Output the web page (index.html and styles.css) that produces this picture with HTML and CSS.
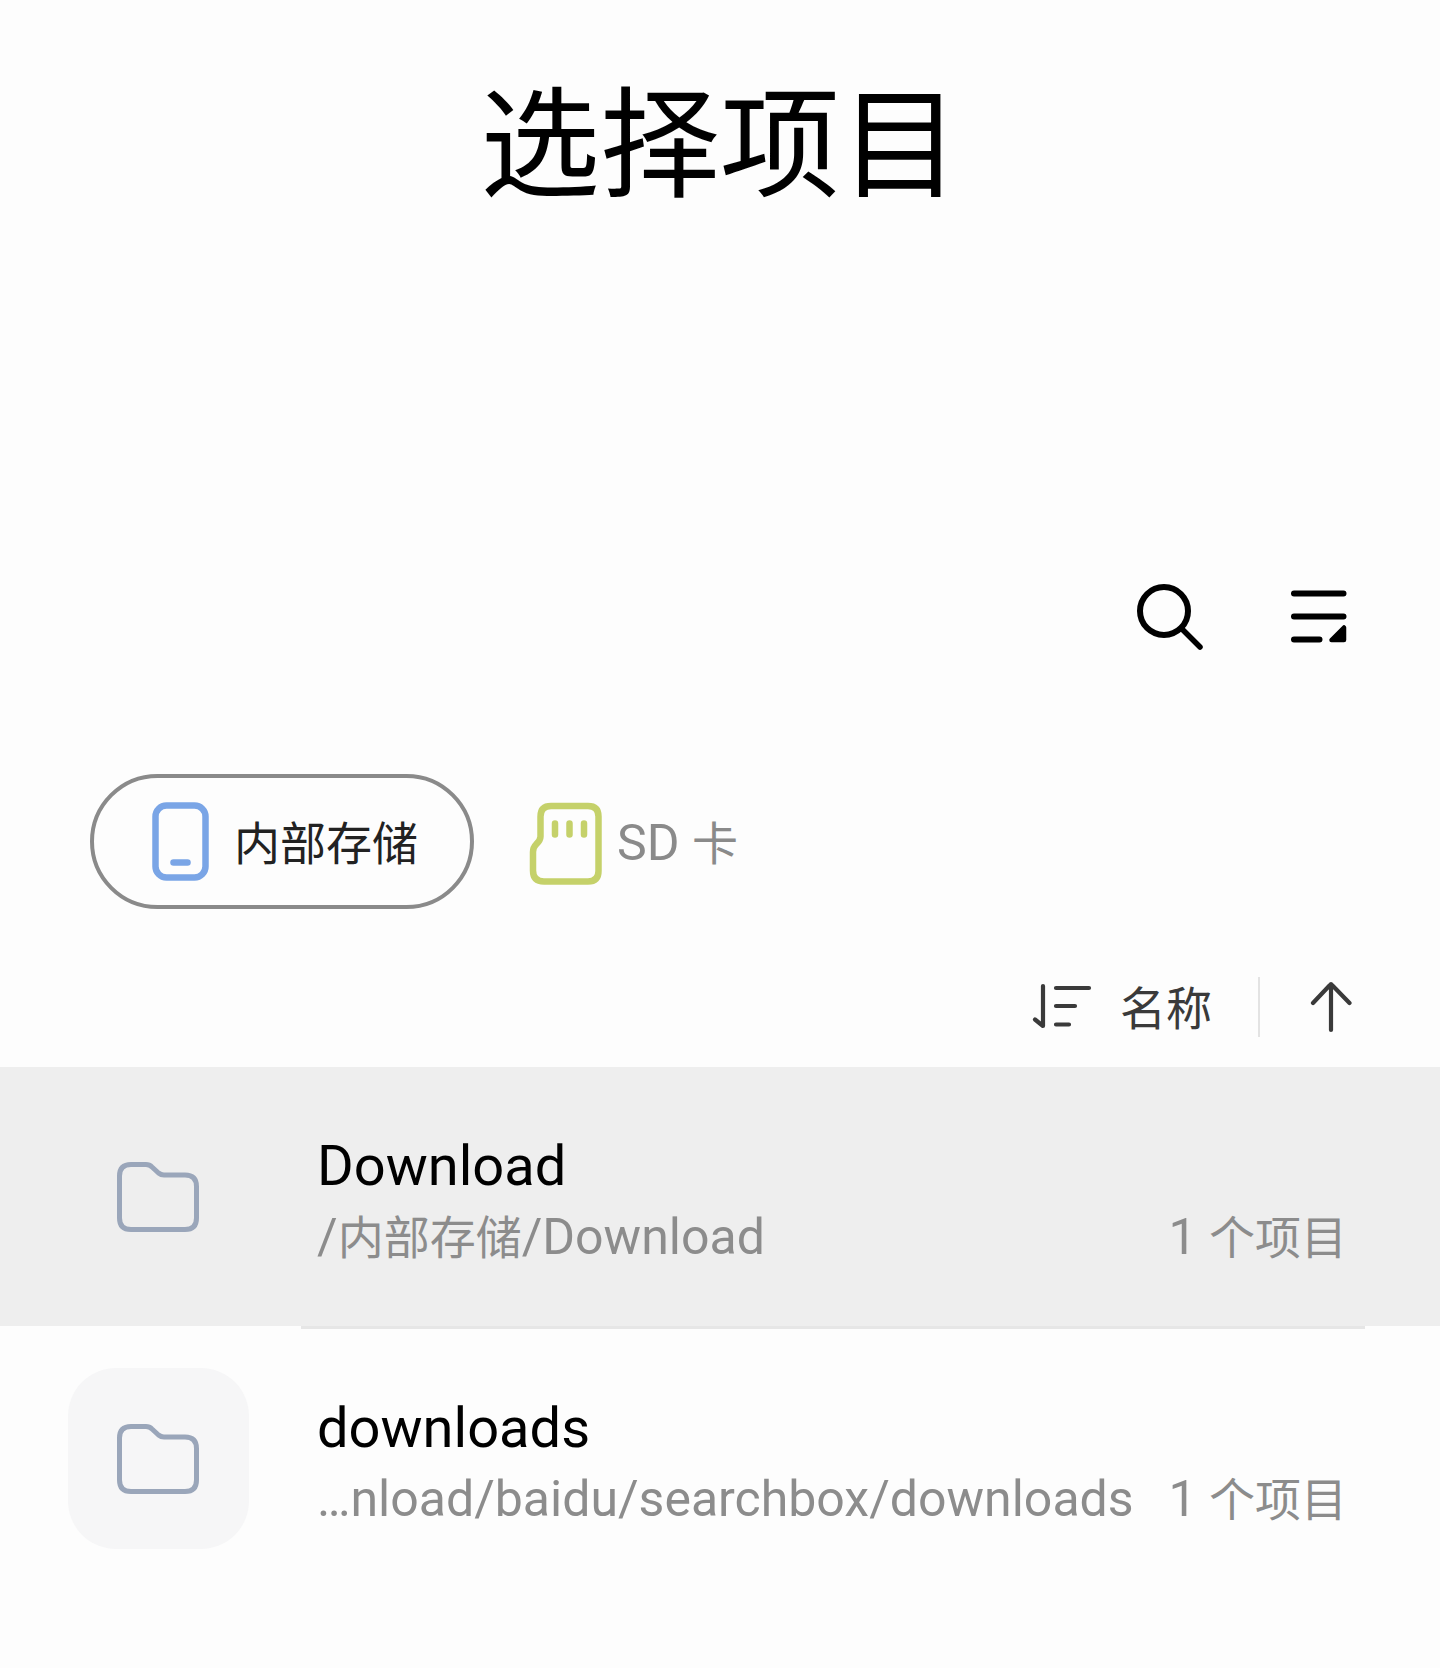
FILE: index.html
```html
<!DOCTYPE html>
<html lang="zh-CN">
<head>
<meta charset="utf-8">
<meta name="viewport" content="width=device-width, initial-scale=1">
<title>选择项目</title>
<link rel="stylesheet" href="styles.css">
</head>
<body>
<header class="header">
  <h1 class="title">选择项目</h1>
  <div class="toolbar">
    <button class="icon-button" type="button" aria-label="搜索">
      <svg width="72" height="72" viewBox="0 0 72 72" fill="none" stroke="#000" stroke-width="6" stroke-linecap="round"><circle cx="30" cy="30" r="24"/><path d="M48 48 66 66" stroke-width="5.5"/></svg>
    </button>
    <button class="icon-button" type="button" aria-label="菜单">
      <svg width="60" height="72" viewBox="0 0 60 72" fill="none" stroke="#000" stroke-width="6" stroke-linecap="round" stroke-linejoin="round"><path d="M5 12.500H54.500M5 35.500H54.500M5 58.500H30.500"/><path d="M42.500 59 55 46.500V59Z" fill="#000" stroke-width="4.500"/></svg>
    </button>
  </div>
</header>
<main>
  <nav class="tabs" aria-label="存储位置">
    <button class="tab tab-selected" type="button" aria-pressed="true">
      <svg width="58" height="80" viewBox="0 0 58 80" fill="none" stroke="#7aa5e6" stroke-width="6.500" stroke-linecap="round"><rect x="3.500" y="3.500" width="50" height="72" rx="11"/><path d="M21.500 60.500H35.500"/></svg>
      <span class="label cjk">内部存储</span>
    </button>
    <button class="tab" type="button" aria-pressed="false">
      <svg width="76" height="88" viewBox="0 -4 76 88" fill="none" stroke="#c5d16a" stroke-width="6.500" stroke-linecap="round" stroke-linejoin="round"><path d="M23 4H60Q70.500 4 70.500 14.500V69Q70.500 79.500 60 79.500H16Q5 79.500 5 68.500V50Q5 45.500 8 42.500 12.500 38.500 12.500 34.500V14.500Q12.500 4 23 4Z"/><path d="M27 21.500V32.500M41.500 21.500V32.500M56 21.500V32.500"/></svg>
      <span class="label">SD <span class="cjk">卡</span></span>
    </button>
  </nav>
  <div class="sort">
    <button class="sort-by" type="button">
      <svg width="60" height="48" viewBox="0 0 60 48" fill="none" stroke="#3a3a3a" stroke-width="4.200" stroke-linecap="round" stroke-linejoin="round"><path d="M11 3V43L3 36.500M24 5H57M24 23H43M24 41.500H37"/></svg>
      <span class="label cjk">名称</span>
    </button>
    <button class="sort-order" type="button" aria-label="升序">
      <svg width="44" height="52" viewBox="0 0 44 52" fill="none" stroke="#3a3a3a" stroke-width="4.200" stroke-linecap="round" stroke-linejoin="round"><path d="M21 49V3M3 22 19.500 4.500Q21 3 22.500 4.500L39.500 22"/></svg>
    </button>
  </div>
  <ul class="list">
    <li>
      <button class="row row-active" type="button">
        <span class="thumb">
          <svg width="84" height="72" viewBox="0 0 84 72" fill="none" stroke="#9aa6ba" stroke-width="5" stroke-linejoin="round"><path d="M14 3.500H29Q32.500 3.500 35 6L41.500 12Q44 14 47 14H68Q79.500 14 79.500 25.500V57Q79.500 68.500 68 68.500H14Q2.500 68.500 2.500 57V15Q2.500 3.500 14 3.500Z"/></svg>
        </span>
        <span class="text">
          <span class="name">Download</span>
          <span class="meta"><span>/<span class="cjk">内部存储</span>/Download</span><span>1 <span class="cjk">个项目</span></span></span>
        </span>
      </button>
    </li>
    <li>
      <button class="row" type="button">
        <span class="thumb">
          <svg width="84" height="72" viewBox="0 0 84 72" fill="none" stroke="#9aa6ba" stroke-width="5" stroke-linejoin="round"><path d="M14 3.500H29Q32.500 3.500 35 6L41.500 12Q44 14 47 14H68Q79.500 14 79.500 25.500V57Q79.500 68.500 68 68.500H14Q2.500 68.500 2.500 57V15Q2.500 3.500 14 3.500Z"/></svg>
        </span>
        <span class="text">
          <span class="name">downloads</span>
          <span class="meta"><span>…nload/baidu/searchbox/downloads</span><span>1 <span class="cjk">个项目</span></span></span>
        </span>
      </button>
    </li>
  </ul>
</main>
</body>
</html>
```
FILE: styles.css
```css
* {
  box-sizing: border-box;
}

body {
  margin: 0;
  min-height: 100vh;
  background: #fdfdfd;
  color: #000;
  font-family: Roboto, "Noto Sans CJK SC", sans-serif;
  font-size: 50px;
  line-height: 68px;
}

button {
  margin: 0;
  padding: 0;
  border: 0;
  background: none;
  color: inherit;
  font: inherit;
  text-align: left;
  cursor: pointer;
}

svg {
  display: block;
  flex: none;
}

.cjk {
  font-size: 46px;
}

.label {
  padding-top: 4px;
}

.header {
  padding-top: 75px;
}

.title {
  margin: 0;
  font-size: 120px;
  font-weight: 400;
  line-height: 144px;
  text-align: center;
}

.toolbar {
  display: flex;
  justify-content: flex-end;
  gap: 83px;
  margin-top: 362px;
  padding-right: 91px;
}

.tabs {
  display: flex;
  margin-top: 121px;
  padding-left: 90px;
}

.tab {
  display: flex;
  align-items: center;
  gap: 13px;
  height: 135px;
  padding: 0 54px;
  color: #8a8a8a;
}

.tab-selected {
  gap: 24px;
  padding: 0 52px 0 58px;
  border: 4px solid #8a8a8a;
  border-radius: 68px;
  color: #222;
}

.sort {
  display: flex;
  justify-content: flex-end;
  height: 60px;
  margin: 68px 0 30px;
  padding-right: 86px;
  color: #3a3a3a;
}

.sort-by {
  display: flex;
  align-items: center;
  gap: 28px;
  padding-right: 46px;
}

.sort-order {
  display: flex;
  align-items: center;
  padding-left: 50px;
  border-left: 2px solid #e3e3e3;
}

.list {
  margin: 0;
  padding: 0;
  list-style: none;
}

.list li + li::before {
  content: "";
  display: block;
  height: 3px;
  margin: 0 75px 0 301px;
  background: #e6e6e6;
}

.row {
  display: flex;
  align-items: center;
  gap: 68px;
  width: 100%;
  height: 259px;
  padding: 0 93px 0 68px;
}

.row-active {
  background: #eee;
}

.thumb {
  display: flex;
  flex: none;
  align-items: center;
  justify-content: center;
  width: 181px;
  height: 181px;
  border-radius: 48px;
  background: #f6f6f7;
}

.row-active .thumb {
  background: none;
}

.text {
  display: flex;
  flex: 1;
  flex-direction: column;
  min-width: 0;
  padding-top: 11px;
}

.name {
  font-size: 56px;
}

.meta {
  display: flex;
  justify-content: space-between;
  padding-top: 3px;
  color: #8c8c8c;
  white-space: nowrap;
}
```
